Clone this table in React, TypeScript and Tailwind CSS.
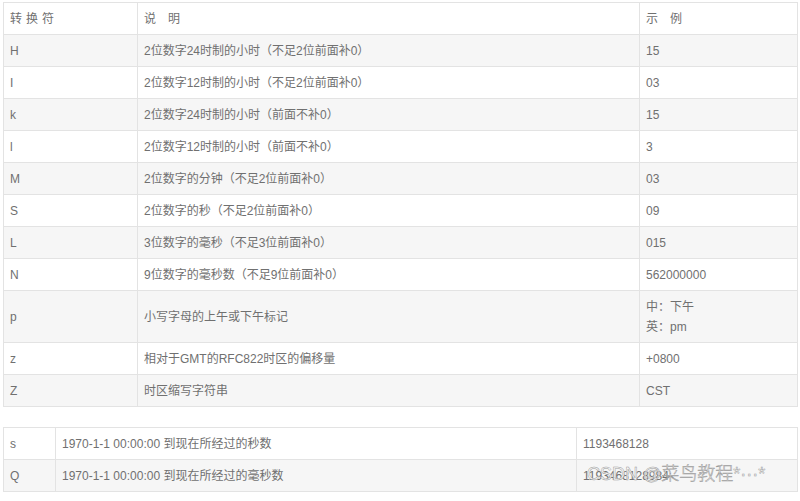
const rows: { code: string; desc: string; example: string[] }[] = [
  { code: "H", desc: "2位数字24时制的小时（不足2位前面补0）", example: ["15"] },
  { code: "I", desc: "2位数字12时制的小时（不足2位前面补0）", example: ["03"] },
  { code: "k", desc: "2位数字24时制的小时（前面不补0）", example: ["15"] },
  { code: "l", desc: "2位数字12时制的小时（前面不补0）", example: ["3"] },
  { code: "M", desc: "2位数字的分钟（不足2位前面补0）", example: ["03"] },
  { code: "S", desc: "2位数字的秒（不足2位前面补0）", example: ["09"] },
  { code: "L", desc: "3位数字的毫秒（不足3位前面补0）", example: ["015"] },
  { code: "N", desc: "9位数字的毫秒数（不足9位前面补0）", example: ["562000000"] },
  { code: "p", desc: "小写字母的上午或下午标记", example: ["中：下午", "英：pm"] },
  { code: "z", desc: "相对于GMT的RFC822时区的偏移量", example: ["+0800"] },
  { code: "Z", desc: "时区缩写字符串", example: ["CST"] },
];

const cell = "border border-[#e3e3e3] pl-[6px] pr-2 pt-[6px] pb-[5px] align-middle leading-[20px]";

export default function App() {
  return (
    <div
      className="w-[800px] h-[501px] bg-white pt-[2px] pl-[3px] text-[12px] text-[#707070]"
      style={{ fontFamily: '"Liberation Sans", "Noto Sans CJK SC", sans-serif' }}
    >
      <table className="w-[794px] border-collapse table-fixed">
        <colgroup>
          <col className="w-[134px]" />
          <col className="w-[502px]" />
          <col className="w-[158px]" />
        </colgroup>
        <tbody>
          <tr className="bg-white">
            <td className={`${cell} tracking-[4px]`}>转换符</td>
            <td className={cell}>说　明</td>
            <td className={cell}>示　例</td>
          </tr>
          {rows.map((r, i) => (
            <tr key={r.code} className={i % 2 === 0 ? "bg-[#f6f6f6]" : "bg-white"}>
              <td className={cell}>{r.code}</td>
              <td className={cell}>{r.desc}</td>
              <td className={cell}>
                {r.example.map((e) => (
                  <div key={e}>{e}</div>
                ))}
              </td>
            </tr>
          ))}
        </tbody>
      </table>

      <table className="w-[794px] border-collapse table-fixed mt-[20px]">
        <colgroup>
          <col className="w-[52px]" />
          <col className="w-[521px]" />
          <col className="w-[221px]" />
        </colgroup>
        <tbody>
          <tr className="bg-white">
            <td className={cell}>s</td>
            <td className={cell}>1970-1-1 00:00:00 到现在所经过的秒数</td>
            <td className={cell}>1193468128</td>
          </tr>
          <tr className="bg-[#f6f6f6]">
            <td className={cell}>Q</td>
            <td className={cell}>1970-1-1 00:00:00 到现在所经过的毫秒数</td>
            <td className={`${cell} relative`}>
              1193468128984
              <span className="absolute left-[10px] top-[2px] text-[18px] font-light leading-[24px] text-white/85 whitespace-nowrap [-webkit-text-stroke:0.5px_#9a9a9a]">
                CSDN @菜鸟教程*···*
              </span>
            </td>
          </tr>
        </tbody>
      </table>
    </div>
  );
}
